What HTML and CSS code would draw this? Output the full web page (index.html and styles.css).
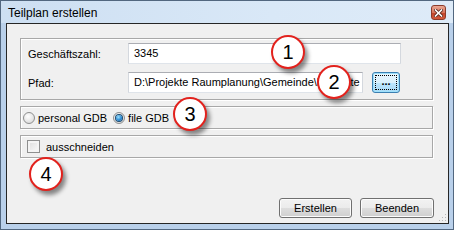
FILE: index.html
```html
<!DOCTYPE html>
<html lang="de">
<head>
    <meta charset="UTF-8">
    <title>Teilplan erstellen</title>
    <link rel="stylesheet" href="styles.css">
</head>
<body>
    <div class="window">
        <div class="titlebar">
            <span class="title">Teilplan erstellen</span>
            <span class="close">
                <svg width="9" height="8" viewBox="0 0 9 8">
                    <path d="M1.5 1 L7.5 7 M7.5 1 L1.5 7" stroke="#5a2a20" stroke-width="3.2" stroke-linecap="square"/>
                    <path d="M1.5 1 L7.5 7 M7.5 1 L1.5 7" stroke="#ffffff" stroke-width="1.6" stroke-linecap="square"/>
                </svg>
            </span>
        </div>

        <div class="client">
            <!-- Eingabefelder -->
            <div class="group fields">
                <div class="row">
                    <label>Geschäftszahl:</label>
                    <div class="textbox number">3345</div>
                </div>
                <div class="row">
                    <label>Pfad:</label>
                    <div class="textbox path">D:\Projekte Raumplanung\Gemeinde\Planakte</div>
                    <button class="browse"><span>...</span></button>
                </div>
            </div>

            <!-- Datenbanktyp -->
            <div class="group options">
                <span class="radio"></span>
                <span class="opt-label">personal GDB</span>
                <span class="radio checked"></span>
                <span class="opt-label">file GDB</span>
            </div>

            <!-- Ausschneiden -->
            <div class="group options check">
                <span class="checkbox"></span>
                <span class="opt-label">ausschneiden</span>
            </div>

            <div class="actions">
                <button class="btn create">Erstellen</button>
                <button class="btn quit">Beenden</button>
            </div>

            <svg class="grip" width="9" height="9" viewBox="0 0 9 9">
                <rect x="7" y="1" width="1" height="1" fill="#b8b8b8"/>
                <rect x="4" y="4" width="1" height="1" fill="#b8b8b8"/>
                <rect x="7" y="4" width="1" height="1" fill="#b8b8b8"/>
                <rect x="1" y="7" width="1" height="1" fill="#b8b8b8"/>
                <rect x="4" y="7" width="1" height="1" fill="#b8b8b8"/>
                <rect x="7" y="7" width="1" height="1" fill="#b8b8b8"/>
            </svg>
        </div>

        <!-- Markierungen -->
        <span class="marker m1">1</span>
        <span class="marker m2">2</span>
        <span class="marker m3">3</span>
        <span class="marker m4">4</span>
    </div>
</body>
</html>
```

FILE: styles.css
```css
body {
    margin: 0;
    background: #ffffff;
    font-family: "Liberation Sans", Arial, sans-serif;
    font-size: 11px;
    color: #000;
}
.window {
    position: relative;
    box-sizing: border-box;
    width: 454px;
    height: 230px;
    border: 1px solid #52677f;
    background: #b9d0ea;
    display: flex;
    flex-direction: column;
}
/* Titelleiste */
.titlebar {
    height: 22px;
    display: flex;
    justify-content: space-between;
    align-items: flex-start;
    padding: 0 7px 0 7px;
    background: linear-gradient(to right, #cddff2, #d9e8f7 60%, #deebf8);
}
.title {
    font-size: 12px;
    margin-top: 5px;
}
.close {
    box-sizing: border-box;
    width: 15px;
    height: 15px;
    margin-top: 4px;
    border: 1px solid #8b3b2b;
    border-radius: 3px;
    background: linear-gradient(to bottom, #eaa793, #d8765e 50%, #c2452b 51%, #d35a3c);
    display: flex;
    align-items: center;
    justify-content: center;
}
/* Fensterinhalt */
.client {
    position: relative;
    flex: 1;
    margin: 0 4px 5px 5px;
    border: 1px solid #262626;
    background: #f0f0f0;
    padding: 14px 15px 5px 13px;
    display: flex;
    flex-direction: column;
}
.group {
    border: 1px solid #a8a8a8;
    box-shadow: 1px 1px 0 #ffffff, inset 1px 1px 0 #ffffff;
    margin-bottom: 6px;
}
.fields {
    height: 62px;
    box-sizing: border-box;
    padding: 4px 0 0 7px;
}
.row {
    display: flex;
    align-items: center;
    height: 21px;
    margin-bottom: 8px;
}
.row label {
    width: 100px;
}
.textbox {
    box-sizing: border-box;
    height: 21px;
    line-height: 19px;
    padding: 0 5px;
    background: #ffffff;
    border: 1px solid #d4d8de;
    border-top-color: #abadb3;
    border-bottom-color: #dfe4ea;
    white-space: nowrap;
    overflow: hidden;
}
.number {
    width: 273px;
}
.path {
    width: 235px;
}
.browse {
    box-sizing: border-box;
    width: 28px;
    height: 21px;
    margin-left: 9px;
    padding: 2px;
    border: 1px solid #3c7fb1;
    border-radius: 3px;
    background: linear-gradient(to bottom, #eaf6fd, #d9f0fc 50%, #bee6fd 51%, #a7d9f5);
    box-shadow: inset 0 0 0 1px #9ee0fb;
    font-family: "Liberation Sans", Arial, sans-serif;
    font-size: 11px;
    font-weight: bold;
}
.browse span {
    display: block;
    height: 100%;
    line-height: 13px;
    outline: 1px dotted #000;
    outline-offset: -1px;
}
.options {
    box-sizing: border-box;
    height: 23px;
    display: flex;
    align-items: center;
    padding-left: 2px;
}
.check {
    padding-left: 6px;
}
.radio {
    box-sizing: border-box;
    width: 12px;
    height: 12px;
    border-radius: 50%;
    border: 1px solid #8e8f8f;
    background: radial-gradient(circle at 40% 35%, #ffffff, #e4e4e4 60%, #cfcfcf);
    display: flex;
    align-items: center;
    justify-content: center;
}
.radio.checked::after {
    content: "";
    width: 6px;
    height: 6px;
    border-radius: 50%;
    background: radial-gradient(circle at 40% 35%, #9fe1fb, #2a8ad4 55%, #0e5a9e);
    box-shadow: 0 0 0 1px #1c4a6e;
}
.checkbox {
    box-sizing: border-box;
    width: 13px;
    height: 13px;
    border: 1px solid #8e8f8f;
    background: linear-gradient(135deg, #dcdcdc, #fbfbfb);
    box-shadow: inset 0 0 0 2px #f4f4f4;
}
.opt-label {
    margin: 0 6px 0 3px;
}
.check .opt-label {
    margin-left: 6px;
}
/* Schaltflächen */
.actions {
    margin-top: auto;
    margin-right: -1px;
    display: flex;
    justify-content: flex-end;
    gap: 8px;
}
.btn {
    box-sizing: border-box;
    height: 20px;
    padding: 0;
    border: 1px solid #707070;
    border-radius: 3px;
    background: linear-gradient(to bottom, #f2f2f2, #ebebeb 50%, #dddddd 51%, #cfcfcf);
    box-shadow: inset 0 0 0 1px #fcfcfc;
    font-family: "Liberation Sans", Arial, sans-serif;
    font-size: 11px;
    color: #000;
}
.create {
    width: 73px;
}
.quit {
    width: 74px;
}
.grip {
    position: absolute;
    right: 1px;
    bottom: 1px;
}
/* Nummerierte Markierungen */
.marker {
    position: absolute;
    box-sizing: border-box;
    width: 34px;
    height: 34px;
    border: 2px solid #e2221d;
    border-radius: 50%;
    background: #ffffff;
    box-shadow: 3px 4px 4px rgba(0, 0, 0, 0.45);
    font-family: "Liberation Sans", Arial, sans-serif;
    font-size: 20px;
    line-height: 30px;
    text-align: center;
    color: #000;
}
.m1 { left: 270px; top: 34px; }
.m2 { left: 316px; top: 64px; }
.m3 { left: 172px; top: 96px; }
.m4 { left: 28px; top: 156px; }
```
